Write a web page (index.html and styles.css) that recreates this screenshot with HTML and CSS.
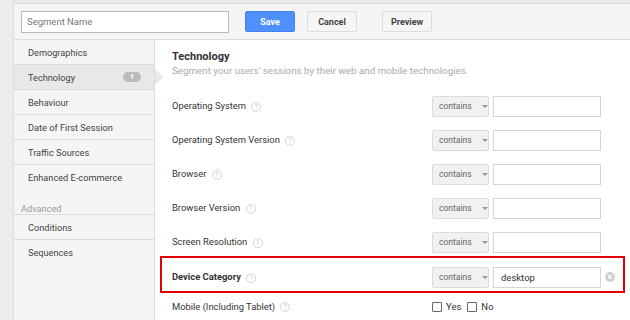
FILE: index.html
```html
<!DOCTYPE html>
<html lang="en">
<head>
    <meta charset="UTF-8">
    <title>Segment Editor</title>
    <link rel="stylesheet" href="styles.css">
</head>
<body>
    <div class="page">
        <div class="gutter"></div>
        <div class="main">
            <div class="topbar">
                <input type="text" class="segment-name" placeholder="Segment Name">
                <button class="btn btn-save">Save</button>
                <button class="btn btn-cancel">Cancel</button>
                <button class="btn btn-preview">Preview</button>
            </div>

            <div class="body">
                <ul class="sidebar">
                    <li class="nav-item">Demographics</li>
                    <li class="nav-item active">Technology <span class="badge">1</span></li>
                    <li class="nav-item">Behaviour</li>
                    <li class="nav-item">Date of First Session</li>
                    <li class="nav-item">Traffic Sources</li>
                    <li class="nav-item last">Enhanced E-commerce</li>
                    <li class="nav-head">Advanced</li>
                    <li class="nav-item">Conditions</li>
                    <li class="nav-item plain">Sequences</li>
                </ul>

                <div class="content">
                    <h2>Technology</h2>
                    <p class="subtitle">Segment your users' sessions by their web and mobile technologies.</p>

                    <div class="row">
                        <span class="label">Operating System <span class="help">?</span></span>
                        <span class="select">contains <span class="caret"></span></span>
                        <input type="text" class="value">
                    </div>
                    <div class="row">
                        <span class="label">Operating System Version <span class="help">?</span></span>
                        <span class="select">contains <span class="caret"></span></span>
                        <input type="text" class="value">
                    </div>
                    <div class="row">
                        <span class="label">Browser <span class="help">?</span></span>
                        <span class="select">contains <span class="caret"></span></span>
                        <input type="text" class="value">
                    </div>
                    <div class="row">
                        <span class="label">Browser Version <span class="help">?</span></span>
                        <span class="select">contains <span class="caret"></span></span>
                        <input type="text" class="value">
                    </div>
                    <div class="row">
                        <span class="label">Screen Resolution <span class="help">?</span></span>
                        <span class="select">contains <span class="caret"></span></span>
                        <input type="text" class="value">
                    </div>
                    <div class="row highlight">
                        <span class="label strong">Device Category <span class="help">?</span></span>
                        <span class="select">contains <span class="caret"></span></span>
                        <input type="text" class="value" value="desktop">
                        <span class="clear">&times;</span>
                    </div>
                    <div class="row short">
                        <span class="label">Mobile (Including Tablet) <span class="help">?</span></span>
                        <label class="check"><span class="box"></span>Yes</label>
                        <label class="check"><span class="box"></span>No</label>
                    </div>
                </div>
            </div>
        </div>
    </div>
</body>
</html>
```

FILE: styles.css
```css
html, body {
    height: 100%;
    overflow: hidden;
}
body {
    margin: 0;
    font-family: Roboto, Arial, sans-serif;
    font-size: 11px;
    color: #333;
    background-color: #fff;
}
.page {
    display: flex;
    height: 320px;
}
.gutter {
    width: 13px;
    background-color: #ececec;
    border-right: 1px solid #dcdcdc;
}
.main {
    flex: 1;
    display: flex;
    flex-direction: column;
    min-height: 0;
    background-color: #e9e9e9;
    padding-top: 3px;
}
.topbar {
    display: flex;
    flex-shrink: 0;
    align-items: center;
    height: 37px;
    padding-left: 7px;
    background-color: #f5f5f5;
    border-top: 1px solid #dcdcdc;
    border-bottom: 1px solid #dcdcdc;
    box-sizing: border-box;
}
.segment-name {
    width: 208px;
    height: 22px;
    box-sizing: border-box;
    border: 1px solid #bbb;
    padding: 0 5px;
    font-family: inherit;
    font-size: 9.5px;
    outline: none;
}
.segment-name::placeholder {
    color: #777;
}
.btn {
    height: 21px;
    width: 50px;
    padding: 0;
    font-family: inherit;
    font-size: 9px;
    font-weight: bold;
    border-radius: 2px;
    cursor: pointer;
}
.btn-save {
    margin-left: 16px;
    background-color: #4d90fe;
    border: 1px solid #4584ee;
    color: #fff;
}
.btn-cancel {
    margin-left: 12px;
    background-color: #f5f5f5;
    border: 1px solid #dcdcdc;
    color: #444;
}
.btn-preview {
    margin-left: 25px;
    background-color: #f5f5f5;
    border: 1px solid #dcdcdc;
    color: #444;
}
.body {
    flex: 1;
    display: flex;
    min-height: 0;
    overflow: hidden;
    background-color: #fff;
}
.sidebar {
    list-style: none;
    margin: 0;
    padding: 0;
    width: 140px;
    background-color: #f5f5f5;
    border-right: 1px solid #dcdcdc;
}
.nav-item {
    position: relative;
    display: flex;
    align-items: center;
    box-sizing: border-box;
    height: 25px;
    padding-left: 14px;
    border-bottom: 1px solid #dcdcdc;
    color: #444;
    font-size: 9.2px;
}
.nav-item.last,
.nav-item.plain {
    height: 24px;
    border-bottom: none;
}
.nav-item.active {
    background-color: #e8e8e8;
}
.nav-item.active::after {
    content: "";
    position: absolute;
    right: -9px;
    top: 4px;
    border-left: 8px solid #e8e8e8;
    border-top: 8px solid transparent;
    border-bottom: 8px solid transparent;
}
.badge {
    margin-left: auto;
    margin-right: 13px;
    width: 18px;
    height: 10px;
    line-height: 10px;
    border-radius: 5px;
    background-color: #bbb;
    color: #fff;
    font-size: 8px;
    font-weight: bold;
    text-align: center;
}
.nav-head {
    margin-top: 13px;
    padding: 1px 0 0 7px;
    height: 11px;
    line-height: 11px;
    color: #999;
    font-size: 9.2px;
    border-bottom: 1px solid #dcdcdc;
}
.content {
    flex: 1;
    padding: 10px 0 0 17px;
}
.content h2 {
    margin: 0;
    font-size: 11px;
    line-height: 14px;
    font-weight: bold;
    color: #333;
}
.subtitle {
    margin: 0 0 11px;
    font-size: 9.8px;
    line-height: 14px;
    color: #aaa;
}
.row {
    display: flex;
    align-items: center;
    height: 34px;
}
.row.short {
    height: 27px;
}
.row.highlight {
    width: 465px;
    height: 37px;
    box-sizing: border-box;
    margin: -3px 0 0 -12px;
    padding: 5px 0 0 10px;
    border: 2px solid #e30000;
}
.label {
    width: 260px;
    font-size: 9.4px;
    color: #333;
}
.label.strong {
    font-weight: bold;
}
.help {
    display: inline-block;
    width: 8px;
    height: 8px;
    line-height: 8px;
    margin-left: 3px;
    border: 1px solid #d6d6d6;
    border-radius: 50%;
    color: #ccc;
    font-size: 7px;
    font-weight: normal;
    text-align: center;
    vertical-align: middle;
}
.select {
    display: flex;
    align-items: center;
    width: 57px;
    height: 21px;
    box-sizing: border-box;
    padding-left: 6px;
    background-color: #f1f1f1;
    border: 1px solid #dcdcdc;
    border-radius: 2px;
    color: #666;
    font-size: 8.5px;
}
.caret {
    margin-left: 10px;
    border-left: 3px solid transparent;
    border-right: 3px solid transparent;
    border-top: 3px solid #999;
}
.value {
    width: 108px;
    height: 21px;
    box-sizing: border-box;
    margin-left: 4px;
    padding: 0 7px;
    border: 1px solid #d4d4d4;
    font-family: inherit;
    font-size: 9.5px;
    color: #333;
    outline: none;
}
.clear {
    width: 10px;
    height: 10px;
    line-height: 10px;
    margin-left: 4px;
    border-radius: 50%;
    background-color: #d0d0d0;
    color: #fff;
    font-size: 9px;
    font-weight: bold;
    text-align: center;
}
.check {
    display: flex;
    align-items: center;
    margin-right: 6px;
    font-size: 9.5px;
    color: #333;
}
.box {
    width: 8px;
    height: 8px;
    margin-right: 4px;
    border: 1px solid #666;
    border-radius: 1px;
}
```
